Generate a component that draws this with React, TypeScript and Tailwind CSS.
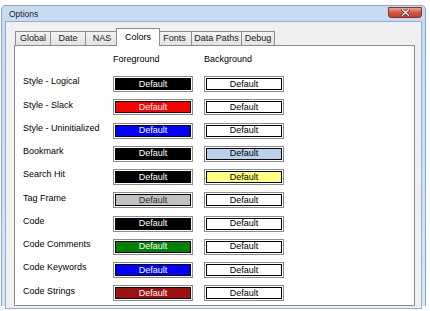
import React from 'react';

// Color rows of the Options dialog
const rows = [
  { label: 'Style - Logical', fg: '#000000', fgText: '#ffffff', bg: '#ffffff', bgText: '#000000' },
  { label: 'Style - Slack', fg: '#ff0000', fgText: '#ffffff', bg: '#ffffff', bgText: '#000000' },
  { label: 'Style - Uninitialized', fg: '#0000ff', fgText: '#ffffff', bg: '#ffffff', bgText: '#000000' },
  { label: 'Bookmark', fg: '#000000', fgText: '#ffffff', bg: '#b9d1ea', bgText: '#000000' },
  { label: 'Search Hit', fg: '#000000', fgText: '#ffffff', bg: '#ffff80', bgText: '#000000' },
  { label: 'Tag Frame', fg: '#c0c0c0', fgText: '#303030', bg: '#ffffff', bgText: '#000000' },
  { label: 'Code', fg: '#000000', fgText: '#ffffff', bg: '#ffffff', bgText: '#000000' },
  { label: 'Code Comments', fg: '#008000', fgText: '#ffffff', bg: '#ffffff', bgText: '#000000' },
  { label: 'Code Keywords', fg: '#0000ff', fgText: '#ffffff', bg: '#ffffff', bgText: '#000000' },
  { label: 'Code Strings', fg: '#a01010', fgText: '#ffffff', bg: '#ffffff', bgText: '#000000' },
];

const tabs = [
  { name: 'Global', w: 'w-[36px]' },
  { name: 'Date', w: 'w-[36px]' },
  { name: 'NAS', w: 'w-[34px]' },
  { name: 'Colors', w: 'w-[44px]', active: true },
  { name: 'Fonts', w: 'w-[35px]' },
  { name: 'Data Paths', w: 'w-[51px]' },
  { name: 'Debug', w: 'w-[34px]' },
];

const ColorButton = ({ fill, text }: { fill: string; text: string }) => (
  <div className="w-[80px] h-[16px] border border-[#8c8c8c] bg-white p-[1px] flex">
    <div
      className="flex-1 border border-black flex items-center justify-center text-[9px] leading-none"
      style={{ backgroundColor: fill, color: text }}
    >
      Default
    </div>
  </div>
);

export default function App() {
  return (
    <div className="w-[430px] h-[311px] bg-white overflow-hidden font-['Liberation_Sans',Arial,sans-serif] text-black">
      <div className="ml-[1px] mt-[5px] w-[425px] h-[301px] flex flex-col border-x border-t border-[#8aa6c8] rounded-t-[5px] bg-gradient-to-b from-[#c6daf1] to-[#d8e6f6]">
        {/* title bar */}
        <div className="relative h-[15px] shrink-0 flex items-center pl-[7px] pt-[1px] text-[8.5px] text-[#1e1e1e]">
          Options
          <div className="absolute right-[3px] top-[1px] w-[34px] h-[11px] rounded-b-[3px] border border-[#8b3328] bg-gradient-to-b from-[#e7a596] via-[#cf5b48] to-[#c2402c] flex items-center justify-center">
            <svg width="9" height="7" viewBox="0 0 9 7">
              <path d="M1.5 0.8 L7.5 6.2 M7.5 0.8 L1.5 6.2" stroke="#5a1a12" strokeWidth="2.6" strokeLinecap="square" />
              <path d="M1.5 0.8 L7.5 6.2 M7.5 0.8 L1.5 6.2" stroke="#ffffff" strokeWidth="1.4" strokeLinecap="square" />
            </svg>
          </div>
        </div>

        {/* client area */}
        <div className="mx-[3px] flex-1 flex flex-col border border-[#8fb0d8] bg-[#f0f0f0] pl-[8px] pr-[6px] pt-[6px] pb-[2px]">
          {/* tab strip */}
          <div className="flex items-end h-[17px] pl-[1px] shrink-0">
            {tabs.map((t, i) =>
              t.active ? (
                <div
                  key={t.name}
                  className={`${t.w} h-[18px] -mb-[1px] -ml-[3px] -mr-[2px] relative z-10 bg-white border-x border-t border-[#898c95] flex items-start justify-center pt-[2px] text-[9px]`}
                >
                  {t.name}
                </div>
              ) : (
                <div
                  key={t.name}
                  className={`${t.w} h-[14px] ${i > 0 ? '-ml-[1px]' : ''} bg-gradient-to-b from-[#f3f3f3] to-[#e2e2e2] border-x border-t border-[#898c95] flex items-center justify-center text-[9px] text-[#1a1a1a]`}
                >
                  {t.name}
                </div>
              )
            )}
          </div>

          {/* tab panel */}
          <div className="flex-1 bg-white border border-[#898c95] pl-[8px] pt-[8px]">
            <div className="flex h-[12px] items-center text-[9px] mb-[6.5px]">
              <div className="w-[90px]" />
              <div className="w-[91px]">Foreground</div>
              <div>Background</div>
            </div>
            {rows.map((r) => (
              <div key={r.label} className="flex items-center h-[23.25px]">
                <div className="w-[90px] text-[9px] pb-[4px]">{r.label}</div>
                <ColorButton fill={r.fg} text={r.fgText} />
                <div className="w-[11px]" />
                <ColorButton fill={r.bg} text={r.bgText} />
              </div>
            ))}
          </div>
        </div>
      </div>
    </div>
  );
}
